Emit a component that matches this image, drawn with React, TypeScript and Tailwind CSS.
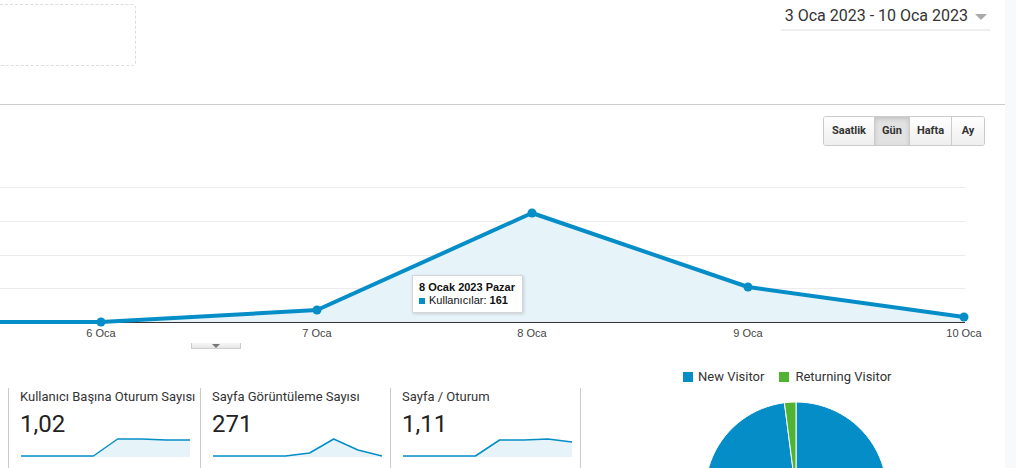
import React from "react";

const BLUE = "#058dc7";

const days = [
  { x: -115, y: 176, label: "" },
  { x: 101, y: 176, label: "6 Oca" },
  { x: 317, y: 164, label: "7 Oca" },
  { x: 532, y: 67, label: "8 Oca" },
  { x: 748, y: 141, label: "9 Oca" },
  { x: 964, y: 171, label: "10 Oca" },
];

const metrics = [
  { title: "Kullanıcı Başına Oturum Sayısı", value: "1,02", spark: [18, 18, 18, 18, 1, 1, 2, 2] },
  { title: "Sayfa Görüntüleme Sayısı", value: "271", spark: [18, 18, 18, 18, 15, 1, 12, 18] },
  { title: "Sayfa / Oturum", value: "1,11", spark: [18, 18, 18, 18, 2, 2, 1, 4] },
];

const Sparkline: React.FC<{ values: number[] }> = ({ values }) => {
  const step = 169 / (values.length - 1);
  const pts = values.map((v, i) => `${(1 + i * step).toFixed(1)},${v}`).join(" ");
  return (
    <svg width="172" height="20" className="block">
      <polygon points={`1,19 ${pts} 170,19`} fill="#e6f3f9" />
      <polyline points={pts} fill="none" stroke={BLUE} strokeWidth="1.5" strokeLinejoin="round" />
    </svg>
  );
};

const Chart: React.FC = () => {
  const line = days.map((d) => `${d.x},${d.y}`).join(" ");
  return (
    <div className="relative h-[197px]">
      <svg width="1005" height="197" className="block">
        {[41, 75, 109, 142].map((y) => (
          <line key={y} x1="0" x2="965" y1={y + 0.5} y2={y + 0.5} stroke="#ececec" />
        ))}
        <polygon points={`-115,176 ${line} 964,176`} fill="#e6f3f9" />
        <line x1="0" x2="965" y1="176.5" y2="176.5" stroke="#333" />
        <polyline points={line} fill="none" stroke={BLUE} strokeWidth="4" strokeLinejoin="round" />
        {days.map((d) => (
          <circle key={d.x} cx={d.x} cy={d.y} r="4.5" fill={BLUE} />
        ))}
        {days
          .filter((d) => d.label)
          .map((d) => (
            <text
              key={d.label}
              x={d.x}
              y="191"
              textAnchor="middle"
              fontSize="11"
              fill="#444"
              fontFamily="'Liberation Sans', Arial, sans-serif"
            >
              {d.label}
            </text>
          ))}
      </svg>
      <div className="absolute left-[412px] top-[129px] w-[111px] h-[38px] bg-white/95 border border-[#d6d6d6] shadow-[1px_1px_3px_rgba(0,0,0,0.15)] px-[6px] pt-[5px] font-['Liberation_Sans',Arial,sans-serif] text-[11px] leading-[13px] text-[#111]">
        <div className="font-bold">8 Ocak 2023 Pazar</div>
        <div className="flex items-center gap-[4px]">
          <span className="w-[6px] h-[6px] bg-[#058dc7]" />
          <span>
            Kullanıcılar: <b>161</b>
          </span>
        </div>
      </div>
    </div>
  );
};

const Pie: React.FC = () => {
  const a = (7.3 * Math.PI) / 180;
  const ex = 92 - 91 * Math.sin(a);
  const ey = 92 - 91 * Math.cos(a);
  return (
    <svg width="184" height="184" className="block">
      <path d={`M92,92 L92,1 A91,91 0 1,1 ${ex},${ey} Z`} fill="#058dc7" stroke="#fff" strokeWidth="1" />
      <path d={`M92,92 L${ex},${ey} A91,91 0 0,1 92,1 Z`} fill="#50b432" stroke="#fff" strokeWidth="1" />
    </svg>
  );
};

export default function App() {
  const buttons = [
    { label: "Saatlik", w: "w-[50px]" },
    { label: "Gün", w: "w-[35px]", active: true },
    { label: "Hafta", w: "w-[42px]" },
    { label: "Ay", w: "w-[33px]" },
  ];

  return (
    <div className="flex w-[1016px] h-[468px] overflow-hidden bg-white font-['Roboto',sans-serif] text-[#333]">
      <div className="w-[1005px] flex flex-col">
        {/* header */}
        <div className="h-[105px] shrink-0 border-b border-[#cccccc] flex justify-between items-start">
          <div className="mt-[4px] w-[136px] h-[62px] border border-dashed border-[#dddddd] border-l-0 rounded-r-[4px]" />
          <div className="mt-[6px] mr-[15px] flex items-center border-b-2 border-[#eeeeee] pl-[4px] pr-[3px] pb-[3px]">
            <span className="text-[16px] leading-[20px] text-[#333]">3 Oca 2023 - 10 Oca 2023</span>
            <span className="ml-[7px] mt-[1px] w-0 h-0 border-l-[6px] border-r-[6px] border-t-[6px] border-l-transparent border-r-transparent border-t-[#aaaaaa]" />
          </div>
        </div>

        {/* interval buttons */}
        <div className="flex justify-end mt-[11px] mr-[20px]">
          <div className="flex h-[30px] border border-[#cccccc] rounded-[3px] overflow-hidden">
            {buttons.map((b, i) => (
              <button
                key={b.label}
                className={`${b.w} h-full text-[11px] font-bold text-[#333] ${i > 0 ? "border-l border-[#cccccc]" : ""} ${
                  b.active
                    ? "bg-[#e2e2e2] shadow-[inset_0_2px_4px_rgba(0,0,0,0.15)]"
                    : "bg-gradient-to-b from-[#ffffff] to-[#eeeeee]"
                }`}
              >
                {b.label}
              </button>
            ))}
          </div>
        </div>

        <Chart />
        <div className="h-[1px] w-[985px] bg-[#cccccc]" />
        <div className="ml-[191px] w-[50px] h-[7px] border border-t-0 border-[#cccccc] bg-gradient-to-b from-[#f6f6f6] to-[#e6e6e6] flex justify-center">
          <span className="mt-[1px] w-0 h-0 border-l-[4px] border-r-[4px] border-t-[4px] border-l-transparent border-r-transparent border-t-[#777777]" />
        </div>

        {/* bottom */}
        <div className="flex items-start">
          <div className="ml-[8px] mt-[39px] flex">
            {metrics.map((m, i) => (
              <div
                key={m.title}
                className={`h-[80px] border-l border-[#cccccc] pl-[11px] pt-[2px] ${i === 0 ? "w-[192px]" : i === 1 ? "w-[190px]" : "w-[191px] border-r"}`}
              >
                <div className="text-[13px] leading-[13px] text-[#333] whitespace-nowrap">{m.title}</div>
                <div className="mt-[7px] text-[24px] leading-[28px] text-[#222]">{m.value}</div>
                <Sparkline values={m.spark} />
              </div>
            ))}
          </div>
          <div className="ml-[102px] mt-[23px] flex flex-col">
            <div className="flex items-center h-[10px] text-[13px] text-[#333]">
              <span className="w-[10px] h-[10px] bg-[#058dc7]" />
              <span className="ml-[5px]">New Visitor</span>
              <span className="ml-[15px] w-[10px] h-[10px] bg-[#50b432]" />
              <span className="ml-[6px]">Returning Visitor</span>
            </div>
            <div className="mt-[19px] ml-[21px]">
              <Pie />
            </div>
          </div>
        </div>
      </div>
      <div className="w-[11px] h-full bg-[#f8f9fa]" />
    </div>
  );
}
